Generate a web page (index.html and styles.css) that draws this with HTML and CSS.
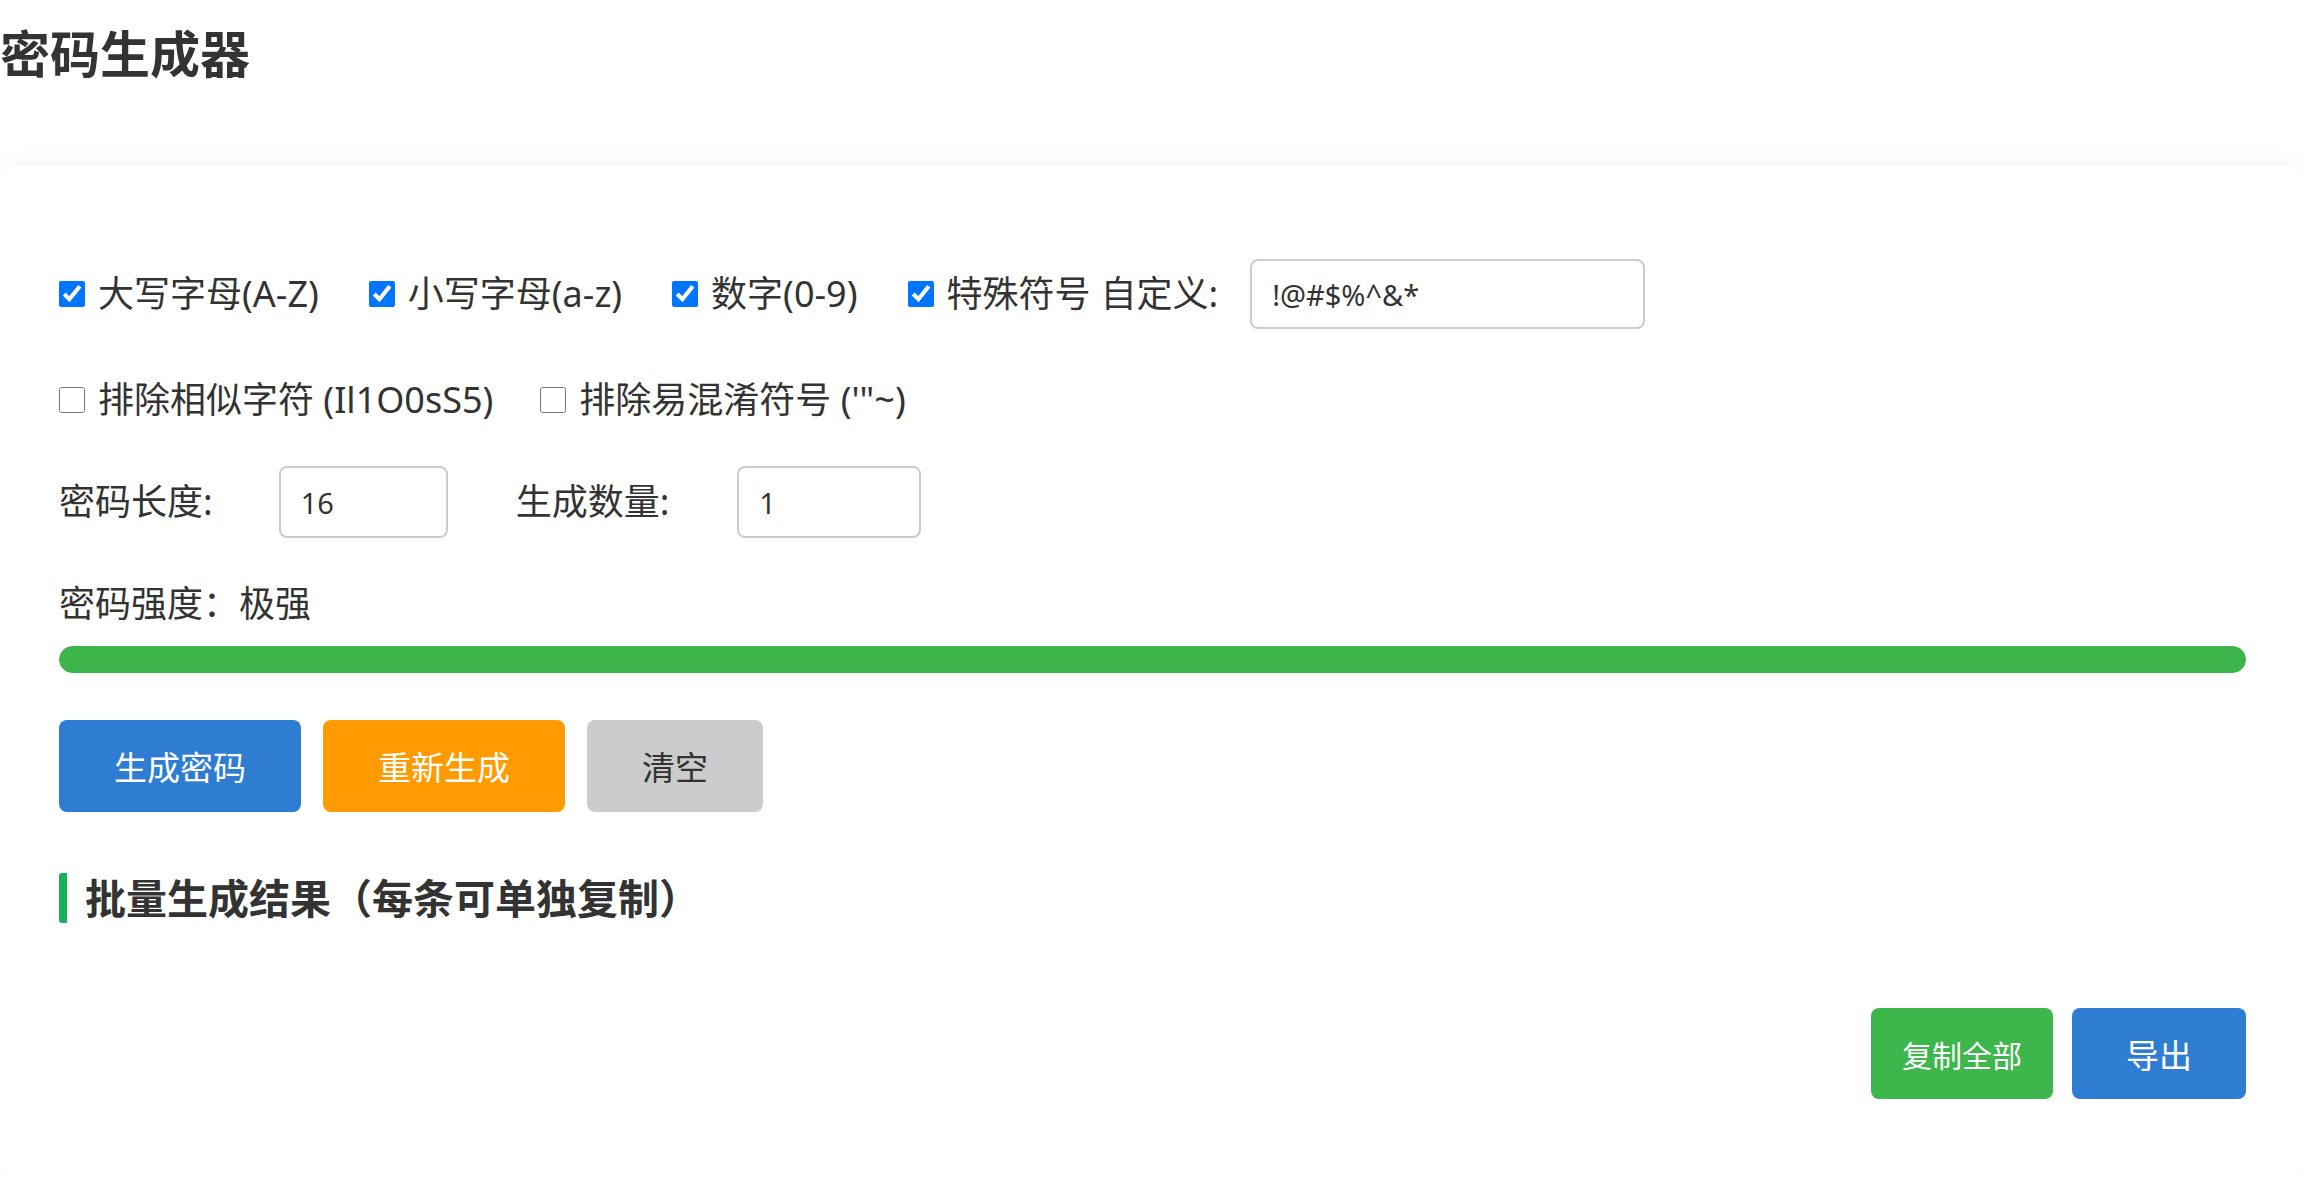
FILE: index.html
```html
<!DOCTYPE html>
<html lang="zh-CN">
<head>
  <meta charset="UTF-8">
  <meta name="viewport" content="width=device-width, initial-scale=1.0">
  <title>密码生成器</title>
  <link rel="stylesheet" href="styles.css">
</head>
<body>
  <h1 class="page-title">密码生成器</h1>

  <div class="card">
    <!-- Character sets -->
    <div class="row options">
      <label class="check"><input type="checkbox" checked>大写字母(A-Z)</label>
      <label class="check"><input type="checkbox" checked>小写字母(a-z)</label>
      <label class="check"><input type="checkbox" checked>数字(0-9)</label>
      <label class="check"><input type="checkbox" checked>特殊符号</label>
      <span class="custom-label">自定义:</span>
      <input type="text" class="text-input custom-input" value="!@#$%^&amp;*">
    </div>

    <!-- Exclusions -->
    <div class="row exclude">
      <label class="check"><input type="checkbox">排除相似字符 (Il1O0sS5)</label>
      <label class="check"><input type="checkbox">排除易混淆符号 ('"~)</label>
    </div>

    <!-- Length and count -->
    <div class="row sizes">
      <span class="field-label">密码长度:</span>
      <input type="number" class="text-input length-input" value="16">
      <span class="field-label">生成数量:</span>
      <input type="number" class="text-input count-input" value="1">
    </div>

    <div class="strength">密码强度：<span id="strength-text">极强</span></div>
    <div class="strength-bar">
      <div class="strength-fill" style="width: 100%"></div>
    </div>

    <div class="actions">
      <button class="btn btn-blue">生成密码</button>
      <button class="btn btn-orange">重新生成</button>
      <button class="btn btn-gray">清空</button>
    </div>

    <h3 class="result-title">批量生成结果（每条可单独复制）</h3>
    <div class="result-list">
      <!-- generated passwords go here -->
    </div>

    <div class="result-actions">
      <button class="btn btn-green copy-all">复制全部</button>
      <button class="btn btn-blue export">导出</button>
    </div>
  </div>
</body>
</html>
```

FILE: styles.css
```css
/* General Styles */
body {
  font-family: "Noto Sans", "Noto Sans CJK SC", sans-serif;
  background-color: #ffffff;
  color: #333333;
  margin: 0;
  padding: 0;
}

.page-title {
  margin: 0;
  padding-top: 24px;
  font-size: 50px;
  line-height: 60px;
  font-weight: 700;
  color: #333333;
}

/* Main card */
.card {
  margin-top: 82px;
  background-color: #ffffff;
  border-radius: 12px;
  box-shadow: 0 0 24px rgba(0, 0, 0, 0.06);
  padding: 93px 58px 76px 59px;
}

.row {
  display: flex;
  align-items: center;
  font-size: 36px;
  line-height: 44px;
}

.check {
  display: inline-flex;
  align-items: center;
  gap: 13px;
  margin-right: 50px;
  cursor: pointer;
}

.check input {
  width: 26px;
  height: 26px;
  margin: 0;
}

.options .check:nth-child(4) {
  margin-right: 10px;
}

.exclude .check {
  margin-right: 47px;
}

.custom-label {
  margin-right: 32px;
}

.text-input {
  box-sizing: border-box;
  font-family: "Noto Sans", "Noto Sans CJK SC", sans-serif;
  font-size: 29px;
  color: #333333;
  border: 2px solid #cccccc;
  border-radius: 8px;
  padding: 0 20px;
  background-color: #ffffff;
  outline: none;
}

.custom-input {
  width: 395px;
  height: 70px;
}

.exclude {
  margin-top: 49px;
}

.sizes {
  margin-top: 44px;
}

.field-label {
  margin-right: 66px;
}

.length-input {
  width: 169px;
  height: 72px;
  margin-right: 68px;
}

.count-input {
  width: 184px;
  height: 72px;
}

.sizes .field-label:nth-of-type(2) {
  margin-right: 68px;
}

/* Strength meter */
.strength {
  margin-top: 44px;
  font-size: 36px;
  line-height: 44px;
}

.strength-bar {
  margin-top: 20px;
  height: 27px;
  border-radius: 14px;
  background-color: #eeeeee;
  overflow: hidden;
}

.strength-fill {
  height: 100%;
  background-color: #3db54b;
  border-radius: 14px;
}

/* Buttons */
.actions {
  display: flex;
  gap: 22px;
  margin-top: 47px;
}

.btn {
  border: none;
  border-radius: 8px;
  height: 92px;
  padding: 0 55px;
  font-family: "Noto Sans", "Noto Sans CJK SC", sans-serif;
  font-size: 33px;
  color: #ffffff;
  cursor: pointer;
}

.btn-blue {
  background-color: #2f7dd3;
}

.btn-orange {
  background-color: #ff9b00;
}

.btn-gray {
  background-color: #cccccc;
  color: #333333;
  padding: 0 55px;
}

.btn-green {
  background-color: #3db64c;
}

/* Results */
.result-title {
  margin: 61px 0 0;
  font-size: 41px;
  line-height: 50px;
  font-weight: 700;
  border-left: 8px solid #17b15a;
  border-radius: 3px;
  padding-left: 18px;
}

.result-list {
  min-height: 85px;
}

.result-actions {
  display: flex;
  justify-content: flex-end;
  gap: 19px;
}

.copy-all {
  height: 91px;
  padding: 0 31px;
  font-size: 30px;
}

.export {
  height: 91px;
  padding: 0 54px;
}
```
